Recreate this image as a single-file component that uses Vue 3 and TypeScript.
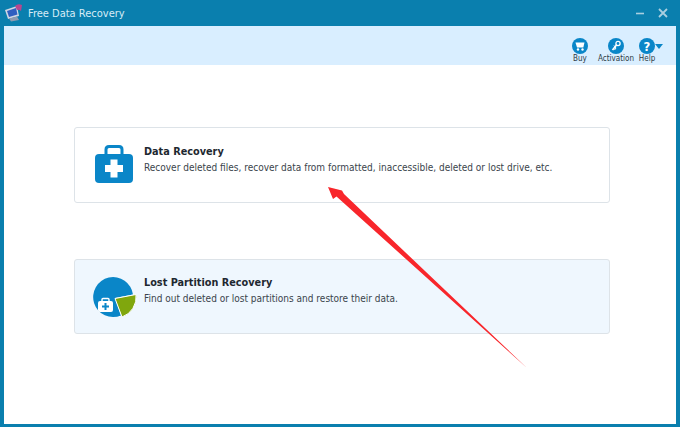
<template>
  <div class="window">
    <header class="titlebar">
      <svg class="app-logo" width="20" height="20" viewBox="0 0 20 20">
        <path d="M1 7 L13 3 L15 13 L4 16 Z" fill="#cfd6e4" />
        <path d="M3 8 L12 5 L13.5 11.5 L5 14 Z" fill="#2f5fc0" />
        <path d="M11 3 Q14 0 18 2 L17 8 Q15 6 13 7 Z" fill="#b7478f" />
        <path d="M5 15.5 L13 13.5 L15 17 L7 18.5 Z" fill="#8d9bb0" />
      </svg>
      <span class="app-title">Free Data Recovery</span>
      <div class="win-controls">
        <svg width="10" height="10" viewBox="0 0 10 10"><path d="M1 5.5 H9" stroke="#a9cfe0" stroke-width="1.6" /></svg>
        <svg width="10" height="10" viewBox="0 0 10 10"><path d="M1 1 L9 9 M9 1 L1 9" stroke="#a9cfe0" stroke-width="1.8" /></svg>
      </div>
    </header>

    <div class="body">
      <nav class="toolbar">
        <div class="tool buy">
          <svg width="16" height="16" viewBox="0 0 16 16">
            <circle cx="8" cy="8" r="8" fill="#0a86c8" />
            <path d="M3.5 4.5 H12.5 L11.3 9.5 H5 Z" fill="#fff" />
            <circle cx="6" cy="11.5" r="1.2" fill="#fff" />
            <circle cx="10.5" cy="11.5" r="1.2" fill="#fff" />
          </svg>
          <span>Buy</span>
        </div>
        <div class="tool activation">
          <svg width="16" height="16" viewBox="0 0 16 16">
            <circle cx="8" cy="8" r="8" fill="#0a86c8" />
            <circle cx="10" cy="5.5" r="2.1" fill="none" stroke="#fff" stroke-width="1.3" />
            <path d="M8.5 7 L4.5 12" stroke="#fff" stroke-width="1.7" />
            <path d="M6 7.5 L8 10 L6.5 12" stroke="#fff" stroke-width="1" fill="none" />
          </svg>
          <span>Activation</span>
        </div>
        <div class="tool help">
          <div class="help-icon">
            <svg width="16" height="16" viewBox="0 0 16 16">
              <circle cx="8" cy="8" r="8" fill="#0a86c8" />
              <text x="8" y="12.5" class="q">?</text>
            </svg>
            <i class="caret" />
          </div>
          <span>Help</span>
        </div>
      </nav>

      <main class="cards">
        <section class="card">
          <svg class="card-icon" width="38" height="38" viewBox="0 0 38 38">
            <path d="M11 10 V4.5 Q11 1.5 14 1.5 H24 Q27 1.5 27 4.5 V10" fill="none" stroke="#0a86c8" stroke-width="3" />
            <rect x="0" y="9" width="38" height="29" rx="4" fill="#0a86c8" />
            <path d="M15.5 14.5 H22.5 V20 H28 V27 H22.5 V32.5 H15.5 V27 H10 V20 H15.5 Z" fill="#fff" />
          </svg>
          <div class="card-text">
            <h2>Data Recovery</h2>
            <p>Recover deleted files, recover data from formatted, inaccessible, deleted or lost drive, etc.</p>
          </div>
        </section>

        <section class="card alt">
          <svg class="card-icon" width="44" height="42" viewBox="0 0 44 42">
            <path d="M28 39.5 A20 20 0 1 1 40 18.5 L22 22 Z" fill="#0a86c8" />
            <path d="M22 22.5 L43 18.5 A21 21 0 0 1 29 41 Z" fill="#80a70d" stroke="#fff" stroke-width="1" />
            <path d="M9 27 V23.5 Q9 22.5 10 22.5 H15 Q16 22.5 16 23.5 V27" fill="none" stroke="#fff" stroke-width="1.4" />
            <rect x="5" y="25" width="15" height="11" rx="2" fill="#fff" />
            <path d="M11.5 27 H13.5 V29.5 H16 V31.5 H13.5 V34 H11.5 V31.5 H9 V29.5 H11.5 Z" fill="#0a86c8" />
          </svg>
          <div class="card-text">
            <h2>Lost Partition Recovery</h2>
            <p>Find out deleted or lost partitions and restore their data.</p>
          </div>
        </section>
      </main>
    </div>

    <svg class="arrow" width="680" height="427" viewBox="0 0 680 427">
      <path d="M527 368 L344 194 L342 190.5 L328 187 L333 199 L336.5 196.5 Z" fill="#f8262b" />
    </svg>
  </div>
</template>

<script setup lang="ts">
</script>

<style>
html, body { margin: 0; background: #0a7fae; }
</style>

<style scoped>
.window {
  position: relative;
  width: 680px;
  height: 427px;
  box-sizing: border-box;
  display: flex;
  flex-direction: column;
  background: #0a7fae;
  padding: 0 4px 3px 4px;
  font-family: "DejaVu Sans", sans-serif;
  font-stretch: condensed;
  overflow: hidden;
}

/* title bar */
.titlebar {
  height: 26px;
  flex: none;
  display: flex;
  align-items: center;
}
.app-logo { margin-right: 4px; margin-bottom: 1px; }
.app-title {
  color: #d7ecf6;
  font-size: 11px;
}
.win-controls {
  margin-left: auto;
  display: flex;
  gap: 13px;
  margin-right: 8px;
}

.body {
  flex: 1;
  background: #fff;
  display: flex;
  flex-direction: column;
}

/* toolbar */
.toolbar {
  height: 39px;
  flex: none;
  background: #d9eeff;
  display: flex;
  justify-content: flex-end;
  align-items: flex-start;
  padding: 12px 20px 0 0;
  box-sizing: border-box;
  gap: 4px;
}
.tool {
  display: flex;
  flex-direction: column;
  align-items: center;
  font-size: 8px;
  color: #2b3a44;
  line-height: 9px;
}
.tool svg { display: block; }
.buy { margin-right: 6px; }
.help { width: 18px; align-items: center; }
.help-icon { display: flex; align-items: center; }
.caret {
  width: 0;
  height: 0;
  border-left: 4px solid transparent;
  border-right: 4px solid transparent;
  border-top: 5px solid #0a86c8;
  margin-right: -8px;
}
.q {
  fill: #fff;
  font-size: 13px;
  font-weight: 700;
  text-anchor: middle;
}

/* cards */
.cards {
  display: flex;
  flex-direction: column;
  gap: 56px;
  padding: 62px 66px 0 70px;
}
.card {
  height: 76px;
  box-sizing: border-box;
  border: 1px solid #dde3e8;
  border-radius: 3px;
  display: flex;
  align-items: center;
  padding-left: 20px;
  background: #fff;
}
.card > .card-icon { margin-top: -2px; }
.card.alt { height: 75px; background: #eff7fe; padding-left: 18px; }
.card-icon { flex: none; margin-right: 11px; }
.card.alt .card-icon { margin-right: 7px; margin-top: 0; }
.card-text { margin-top: -12px; }
.card.alt .card-text { margin-top: -13px; }
h2 {
  margin: 0 0 2px;
  font-size: 10.8px;
  line-height: 14px;
  font-weight: 700;
  color: #1e2830;
}
p {
  margin: 0;
  font-size: 10px;
  line-height: 13px;
  color: #3a444c;
}

/* annotation drawn over the screenshot */
.arrow {
  position: absolute;
  left: 0;
  top: 0;
  pointer-events: none;
}
</style>
